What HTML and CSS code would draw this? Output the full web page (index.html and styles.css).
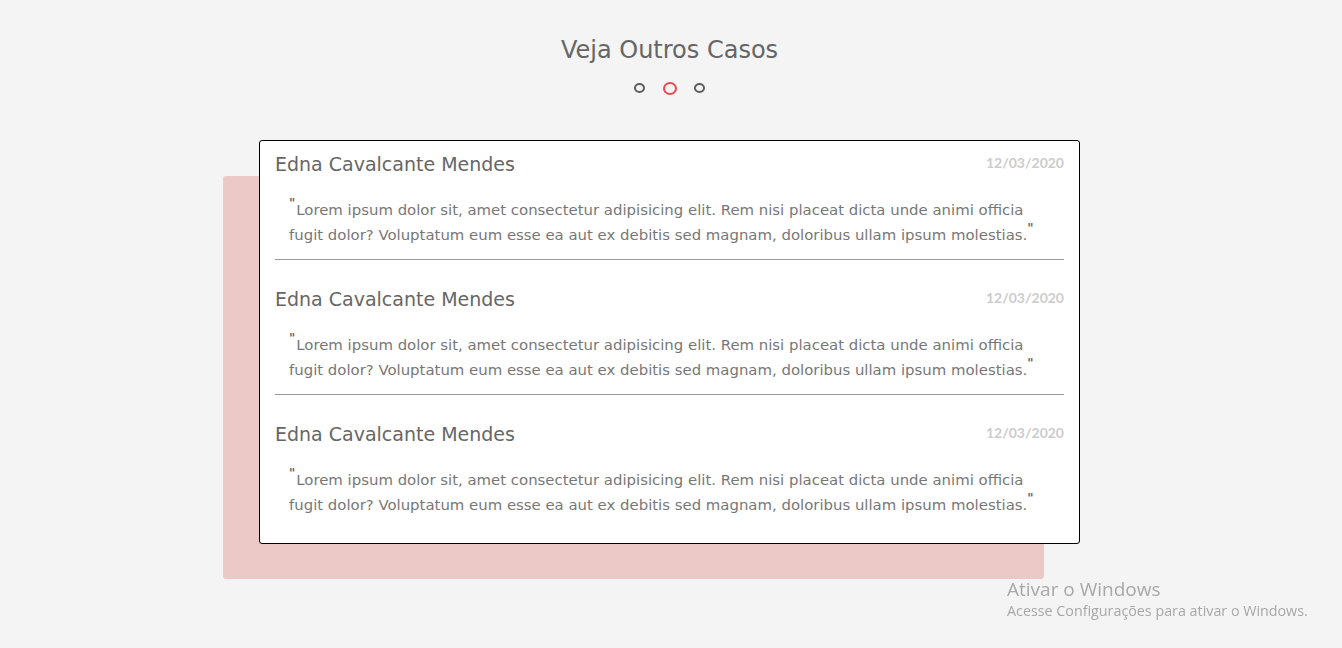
FILE: index.html
```html
<!DOCTYPE html>
<html lang="pt-BR">
<head>
<meta charset="utf-8">
<title>Veja Outros Casos</title>
<link rel="stylesheet" href="styles.css">
</head>
<body>
<section class="cases">
  <h2 class="cases-title">Veja Outros Casos</h2>
  <div class="dots">
    <span class="dot"></span>
    <span class="dot dot-active"></span>
    <span class="dot"></span>
  </div>
  <div class="card-wrap">
    <div class="card">
      <article class="item">
        <div class="item-head">
          <h3 class="item-name">Edna Cavalcante Mendes</h3>
          <span class="item-date">12/03/2020</span>
        </div>
        <p class="item-quote">Lorem ipsum dolor sit, amet consectetur adipisicing elit. Rem nisi placeat dicta unde animi officia fugit dolor? Voluptatum eum esse ea aut ex debitis sed magnam, doloribus ullam ipsum molestias.</p>
      </article>
      <hr class="sep">
      <article class="item">
        <div class="item-head">
          <h3 class="item-name">Edna Cavalcante Mendes</h3>
          <span class="item-date">12/03/2020</span>
        </div>
        <p class="item-quote">Lorem ipsum dolor sit, amet consectetur adipisicing elit. Rem nisi placeat dicta unde animi officia fugit dolor? Voluptatum eum esse ea aut ex debitis sed magnam, doloribus ullam ipsum molestias.</p>
      </article>
      <hr class="sep">
      <article class="item">
        <div class="item-head">
          <h3 class="item-name">Edna Cavalcante Mendes</h3>
          <span class="item-date">12/03/2020</span>
        </div>
        <p class="item-quote">Lorem ipsum dolor sit, amet consectetur adipisicing elit. Rem nisi placeat dicta unde animi officia fugit dolor? Voluptatum eum esse ea aut ex debitis sed magnam, doloribus ullam ipsum molestias.</p>
      </article>
    </div>
  </div>
</section>
<div class="activate">
  <div class="activate-title">Ativar o Windows</div>
  <div class="activate-sub">Acesse Configurações para ativar o Windows.</div>
</div>
</body>
</html>
```

FILE: styles.css
```css
html, body {
  margin: 0;
  padding: 0;
}
body {
  background: #f4f4f4;
  font-family: "DejaVu Sans", "Open Sans", sans-serif;
  color: #666;
  padding-right: 3px;
  height: 648px;
  overflow: hidden;
}
.cases {
  display: flex;
  flex-direction: column;
  align-items: center;
  padding-top: 35px;
}
.cases-title {
  margin: 0;
  font-size: 24px;
  line-height: 30px;
  font-weight: 400;
  color: #666;
}
.dots {
  display: flex;
  align-items: center;
  gap: 17.5px;
  margin-top: 16px;
  height: 14px;
}
.dot {
  box-sizing: border-box;
  width: 11px;
  height: 10px;
  border: 2px solid #5c5c5c;
  border-radius: 50%;
}
.dot-active {
  width: 14px;
  height: 13px;
  border-color: #e84a4f;
}
.card-wrap {
  position: relative;
  margin-top: 45px;
  width: 821px;
}
.card-wrap::before {
  content: "";
  position: absolute;
  left: -36px;
  top: 36px;
  width: 821px;
  height: 403px;
  background: #ecc8c6;
  border-radius: 3px;
}
.card {
  position: relative;
  box-sizing: border-box;
  background: #fff;
  border: 1px solid #000;
  border-radius: 3px;
  padding: 11px 15px 25px;
}
.item-head {
  display: flex;
  justify-content: space-between;
  align-items: center;
  height: 24px;
}
.item-name {
  margin: 0;
  font-size: 19px;
  font-weight: 400;
  color: #666;
  line-height: 24px;
}
.item-date {
  font-family: "Lato", sans-serif;
  font-size: 14px;
  font-weight: 700;
  color: #ccc;
  margin-top: -3px;
}
.item-quote {
  margin: 22px 0 0;
  padding: 0 14px;
  font-size: 14.9px;
  line-height: 25px;
  color: #777;
}
.item-quote::before,
.item-quote::after {
  content: "\"";
  font-weight: 700;
  font-size: 12px;
  line-height: 0;
  color: #666;
  vertical-align: 8px;
}
.item-quote::before {
  margin-right: 1px;
}
.sep {
  margin: 11px 0 27px;
  border: 0;
  border-top: 1px solid #999;
  height: 0;
}
.activate {
  position: fixed;
  left: 1007px;
  top: 577px;
  font-family: "Open Sans", "Noto Sans", sans-serif;
  color: #a8a8a8;
}
.activate-title {
  font-size: 19px;
  line-height: 24px;
}
.activate-sub {
  font-size: 14.3px;
  line-height: 20px;
}
```
